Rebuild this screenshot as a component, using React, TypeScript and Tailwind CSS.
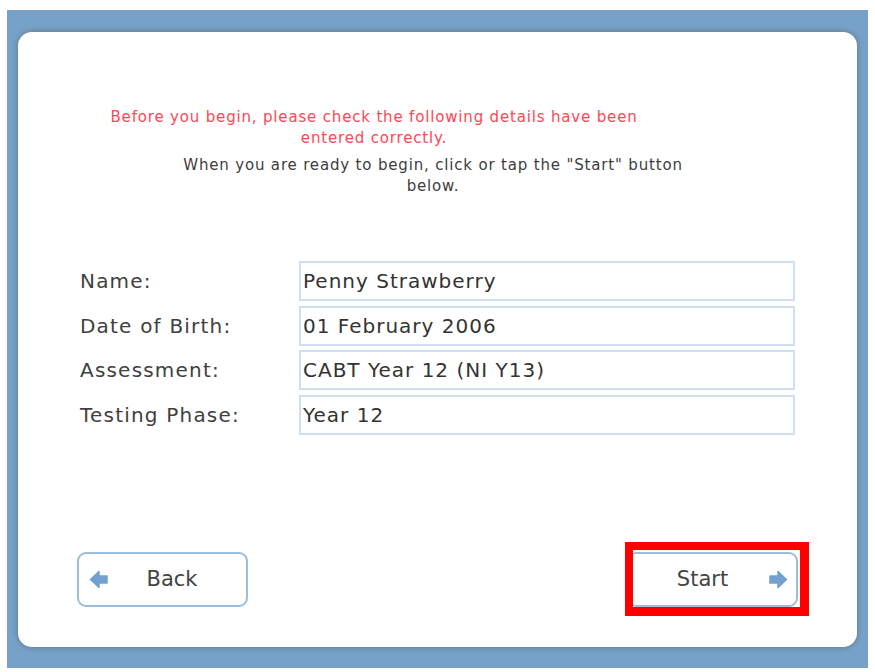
import React from "react";

const font = { fontFamily: '"DejaVu Sans", "Noto Sans", sans-serif' };

const ArrowIcon: React.FC<{ dir: "left" | "right" }> = ({ dir }) => (
    <svg
        width="19"
        height="19"
        viewBox="0 0 19 19"
        className={dir === "left" ? "-scale-x-100" : ""}
    >
        <path
            d="M1 6 H9 V1.5 L17.5 9.5 L9 17.5 V13 H1 Z"
            fill="#73a1cf"
            stroke="#73a1cf"
            strokeWidth="1.5"
            strokeLinejoin="round"
        />
    </svg>
);

const fields = [
    { label: "Name:", value: "Penny Strawberry" },
    { label: "Date of Birth:", value: "01 February 2006" },
    { label: "Assessment:", value: "CABT Year 12 (NI Y13)" },
    { label: "Testing Phase:", value: "Year 12" },
];

const App: React.FC = () => {
    return (
        <div className="w-[875px] h-[672px] bg-white pt-[10px] px-[7px]" style={font}>
            <div className="h-[658px] bg-[#76a2c9] pt-[22px] pb-[21px] px-[11px] flex">
                <div className="flex-1 flex flex-col bg-white rounded-[14px] shadow-[0_0_4px_2px_rgba(90,90,90,0.35)]">
                    <div className="mt-[75px] ml-[66px] w-[580px] text-center text-[15px] leading-[21px] tracking-[0.83px] text-[#ff4655]">
                        Before you begin, please check the following details have been
                        <br />
                        entered correctly.
                    </div>
                    <div className="mt-[6px] ml-[135px] w-[560px] text-center text-[15px] leading-[21px] tracking-[0.83px] text-[#3d3d3d]">
                        When you are ready to begin, click or tap the "Start" button
                        <br />
                        below.
                    </div>

                    <div className="mt-[64px] flex flex-col gap-[4.7px]">
                        {fields.map((f) => (
                            <div key={f.label} className="flex items-center">
                                <div className="ml-[62px] w-[219px] text-[20px] tracking-[1.2px] text-[#404040]">
                                    {f.label}
                                </div>
                                <div className="w-[496px] h-[40px] flex items-center px-[2px] border-2 border-[#d0dff0] text-[20px] tracking-[1px] text-[#333] bg-white">
                                    {f.value}
                                </div>
                            </div>
                        ))}
                    </div>

                    <div className="flex-1" />

                    <div className="flex justify-between px-[59px] pb-[40px]">
                        <button className="w-[171px] h-[55px] flex items-center pl-[10px] pr-[10px] border-2 border-[#9dbde0] rounded-[9px] bg-white">
                            <ArrowIcon dir="left" />
                            <span className="flex-1 text-center text-[21px] text-[#444]">Back</span>
                        </button>
                        <div className="relative">
                            <button className="w-[171px] h-[55px] flex items-center pl-[7px] pr-[8px] border-2 border-[#9dbde0] rounded-[9px] bg-white">
                                <span className="flex-1 text-center text-[21px] text-[#444]">Start</span>
                                <ArrowIcon dir="right" />
                            </button>
                            <div className="absolute left-[-2px] top-[-10px] w-[184px] h-[74px] border-[8px] border-r-[9px] border-b-[9px] border-[#ff0000]" />
                        </div>
                    </div>
                </div>
            </div>
        </div>
    );
};

export default App;
